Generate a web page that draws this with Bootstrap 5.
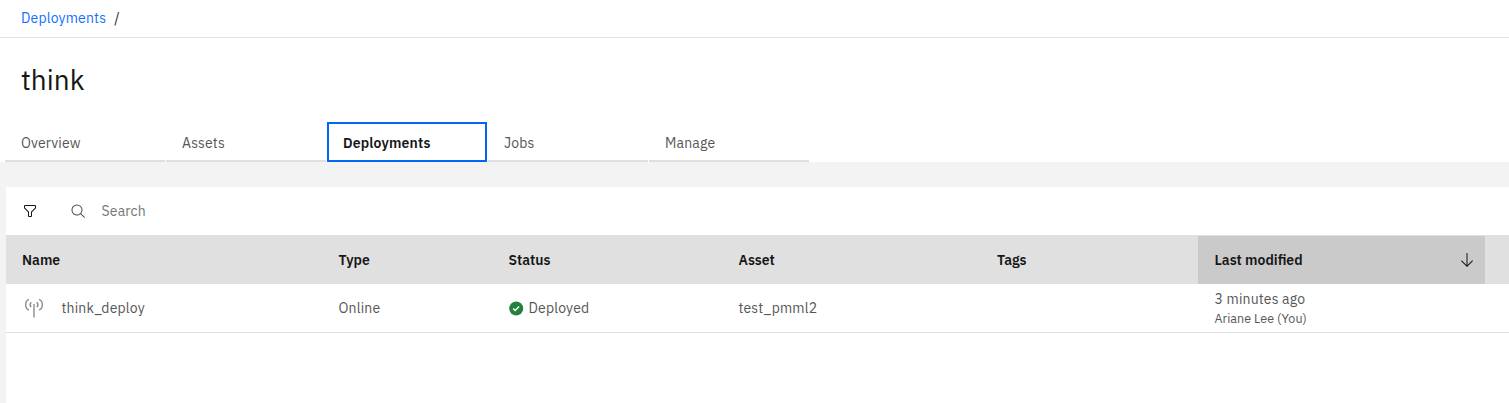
<!DOCTYPE html>
<html lang="en">
<head>
<meta charset="utf-8">
<meta name="viewport" content="width=device-width, initial-scale=1">
<title>think - Deployments</title>
<link rel="stylesheet" href="https://cdn.jsdelivr.net/npm/bootstrap@5.3.0/dist/css/bootstrap.min.css">
<style>
  body { font-family: "IBM Plex Sans", Roboto, sans-serif; font-size: 14px; line-height: 18px; letter-spacing: .16px; color: #565656; background: #f3f3f3; height: 403px; overflow: hidden; }
  svg { display: block; flex: none; }
  .crumbs { height: 38px; padding: 0 21px 2px; border-bottom: 1px solid #e0e0e0; }
  .crumbs a { color: #0f6fff; }
  .page-title { font-size: 28px; font-weight: 400; line-height: 36px; letter-spacing: 0; color: #161616; padding: 24px 21px 0; height: 84px; }
  .page-tabs { gap: 1px; padding-left: 5px; }
  .page-tabs .nav-link { width: 160px; height: 40px; padding: 12px 16px 0; color: #565656; border-bottom: 2px solid #e0e0e0; border-radius: 0; }
  .page-tabs .nav-link.active { color: #161616; font-weight: 600; border: 2px solid #0068f5; padding: 10px 14px 0; }
  .panel { margin: 25px 0 0 6px; height: 216px; }
  .toolbar { height: 48px; padding-left: 16px; }
  .search-icon { margin-left: 32px; }
  .search-input { font: inherit; letter-spacing: inherit; line-height: 18px; border: 0; padding: 0; margin-left: 15.5px; width: 400px; background: none; }
  .search-input::placeholder { color: #757575; opacity: 1; }
  .data-grid { table-layout: fixed; width: 1503px; margin: 0; border-collapse: separate; border-spacing: 0; --bs-table-bg: transparent; color: #565656; }
  .data-grid th, .data-grid td { padding: 0 16px; border: 0; vertical-align: middle; color: inherit; white-space: nowrap; box-shadow: none; }
  .data-grid thead { color: #161616; }
  .data-grid thead th { height: 49px; font-weight: 600; background: #e0e0e0; border-top: 1px solid #e0e0e0; letter-spacing: 0; }
  .data-grid thead th.sorted { background: #cacaca; padding-right: 10px; }
  .data-grid tbody td { height: 49px; border-bottom: 1px solid #e0e0e0; }
  .data-grid .nudge { padding-left: 16.5px; }
  .antenna { margin: 0 17.5px 0 2px; }
  .status-icon { margin-right: 5px; }
  .meta { font-size: 12.5px; line-height: 16px; letter-spacing: .04px; margin-top: 2px; }
</style>
</head>
<body>
<header class="bg-white">
  <nav class="crumbs d-flex align-items-center" aria-label="breadcrumb">
    <a class="text-decoration-none" href="#">Deployments</a><span class="ms-2 text-dark">/</span>
  </nav>
  <h1 class="page-title m-0">think</h1>
  <ul class="page-tabs nav">
    <li class="nav-item"><a class="nav-link" href="#">Overview</a></li>
    <li class="nav-item"><a class="nav-link" href="#">Assets</a></li>
    <li class="nav-item"><a class="nav-link active" aria-current="page" href="#">Deployments</a></li>
    <li class="nav-item"><a class="nav-link" href="#">Jobs</a></li>
    <li class="nav-item"><a class="nav-link" href="#">Manage</a></li>
  </ul>
</header>
<main class="panel bg-white">
  <div class="toolbar d-flex align-items-center">
    <svg width="16" height="16" viewBox="0 0 32 32" fill="#161616"><path d="M18 28H14a2 2 0 0 1-2-2V18.410L4.590 11A2 2 0 0 1 4 9.590V6A2 2 0 0 1 6 4H26a2 2 0 0 1 2 2V9.590A2 2 0 0 1 27.410 11L20 18.410V26A2 2 0 0 1 18 28ZM6 6V9.590l8 8V26h4V17.590l8-8V6Z"/></svg>
    <svg class="search-icon" width="16" height="16" viewBox="0 0 32 32" fill="#525252"><path d="M30 28.590 22.450 21A11 11 0 1 0 21 22.450L28.590 30ZM5 14a9 9 0 1 1 9 9A9 9 0 0 1 5 14Z"/></svg>
    <input class="search-input" type="text" placeholder="Search" aria-label="Search">
  </div>
  <table class="data-grid table">
    <colgroup><col style="width:316.500px"><col style="width:170px"><col style="width:230px"><col style="width:258.500px"><col style="width:217px"><col style="width:287px"><col style="width:24px"></colgroup>
    <thead>
      <tr>
        <th>Name</th><th>Type</th><th>Status</th><th>Asset</th><th>Tags</th>
        <th class="sorted nudge"><div class="d-flex align-items-center justify-content-between"><span>Last modified</span><svg width="16" height="16" viewBox="0 0 32 32" fill="#161616"><path d="M15 2h2v24.170l9.590-9.580L28 18 16 30 4 18l1.410-1.410L15 26.170Z"/></svg></div></th>
        <th class="p-0"></th>
      </tr>
    </thead>
    <tbody>
      <tr>
        <td><div class="d-flex align-items-center"><svg class="antenna" width="20" height="20" viewBox="0 0 20 20" fill="none" stroke="#8d8d8d" stroke-width="1.400"><path d="M10 6v13.500M7.200 4.200a3.600 3.600 0 0 0 0 4.900M12.800 4.200a3.600 3.600 0 0 1 0 4.900M4.900 1.300C.6 3.200.6 10.200 4.900 12.200M15.100 1.300c4.300 1.900 4.300 8.900 0 10.900"/></svg><span>think_deploy</span></div></td>
        <td>Online</td>
        <td><div class="d-flex align-items-center"><svg class="status-icon" width="15" height="15" viewBox="0 0 15 15"><circle cx="7.200" cy="7.500" r="7" fill="#24803d"/><path d="m4.200 7.500 2 2 3.900-3.900" fill="none" stroke="#fff" stroke-width="1.400"/></svg><span>Deployed</span></div></td>
        <td>test_pmml2</td><td></td>
        <td class="nudge"><div>3 minutes ago</div><div class="meta">Ariane Lee (You)</div></td>
        <td class="p-0"></td>
      </tr>
    </tbody>
  </table>
</main>
<script src="https://cdn.jsdelivr.net/npm/bootstrap@5.3.0/dist/js/bootstrap.bundle.min.js"></script>
</body>
</html>
